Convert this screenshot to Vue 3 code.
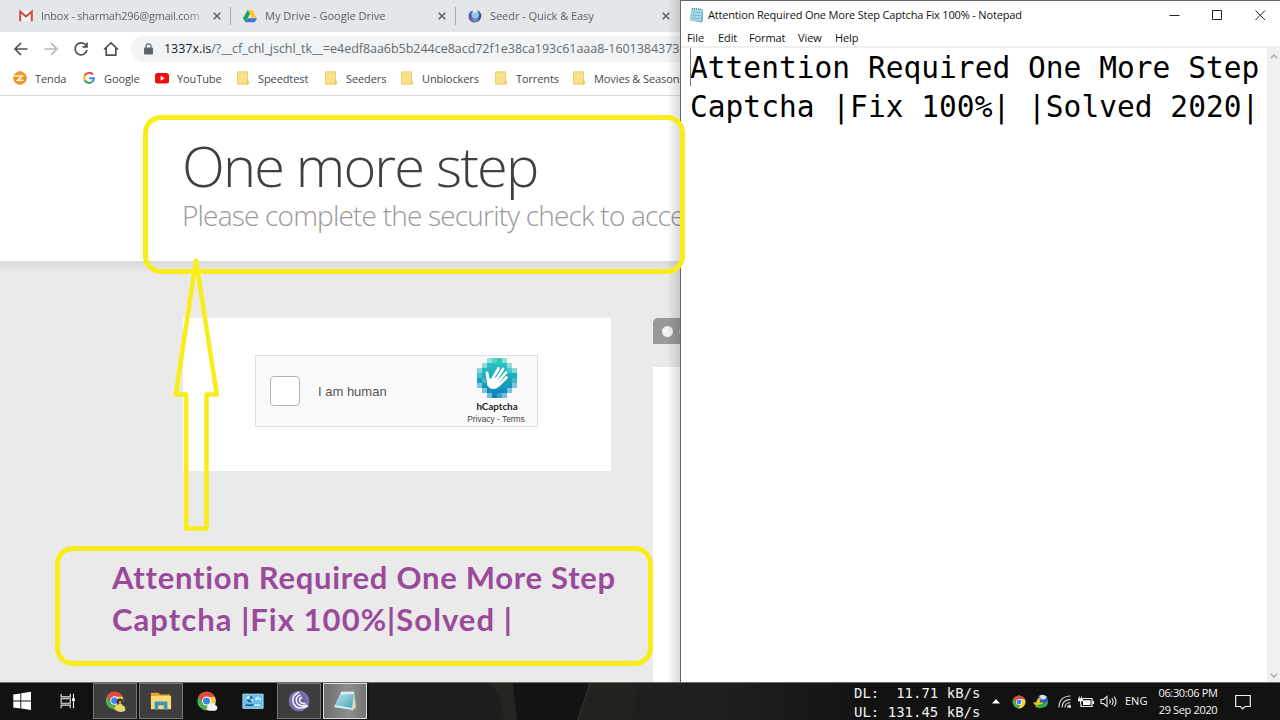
<script setup>
const tabs = [
  { icon: 'gmail', title: 'Inbox - sharmah296@gmail.com', width: 211, cls: 'inbox' },
  { icon: 'drive', title: 'My Drive - Google Drive', width: 225, cls: 'drive' },
  { icon: 'seedr', title: 'Seedr - Quick & Easy', width: 224, cls: 'seedr' }
];

const bookmarks = [
  { icon: 'tenda', name: 'Tenda', width: 69 },
  { icon: 'google', name: 'Google', width: 73 },
  { icon: 'youtube', name: 'YouTube', width: 81 },
  { icon: 'folder', name: 'Speedtest', width: 88 },
  { icon: 'folder', name: 'Seeders', width: 76 },
  { icon: 'folder', name: 'Unblockers', width: 94 },
  { icon: 'folder', name: 'Torrents', width: 78 },
  { icon: 'folder', name: 'Movies & Seasons', width: 140 }
];

const menus = ['File', 'Edit', 'Format', 'View', 'Help'];

const apps = [
  { icon: 'windows' },
  { icon: 'taskview' },
  { icon: 'chrome-user', state: 'open' },
  { icon: 'explorer', state: 'open' },
  { icon: 'chrome-cloud' },
  { icon: 'panel' },
  { icon: 'bittorrent', state: 'open' },
  { icon: 'notepad', state: 'active' }
];
</script>

<template>
  <div class="desktop">
    <svg class="sprite" width="0" height="0">
      <defs>
        <linearGradient id="g-seedr" x1="0" x2="1"><stop offset="0" stop-color="#5a3ca0" /><stop offset=".5" stop-color="#5aa6c8" /><stop offset="1" stop-color="#3c3c8c" /></linearGradient>
        <linearGradient id="g-cap" x1="0" y1="0" x2="0" y2="1"><stop offset="0" stop-color="#2fd0bd" /><stop offset="1" stop-color="#0b7fc0" /></linearGradient>
        <linearGradient id="g-note" x1="0" y1="0" x2="1" y2="1"><stop offset="0" stop-color="#c9eef5" /><stop offset="1" stop-color="#3f9db5" /></linearGradient>
        <radialGradient id="g-bit"><stop offset="0" stop-color="#5d4f97" /><stop offset="1" stop-color="#8076b4" /></radialGradient>
      </defs>
      <symbol id="gmail" viewBox="0 0 14 14">
        <path d="M1 2h12v10H1z" fill="#f3f3f3" />
        <path d="M1.200 12.200V2.600L7 7.400l5.800-4.800v9.600" fill="none" stroke="#d14a40" stroke-width="2" />
      </symbol>
      <symbol id="drive" viewBox="0 0 14 14">
        <path d="M4.700 1h4.600l4.700 8.200H9.300z" fill="#fbc52e" />
        <path d="M4.700 1L7 5.100 2.400 13.200 0 9.200z" fill="#1da362" />
        <path d="M4.800 9.200H14l-2.300 4H2.400z" fill="#3f74d1" />
      </symbol>
      <symbol id="seedr" viewBox="0 0 14 14">
        <circle cx="7" cy="7" r="6.300" fill="url(#g-seedr)" />
        <circle cx="7.200" cy="5.800" r="3.700" fill="#8fcbe0" />
        <path d="M4 0Q4.500 3.800 7 4 9.500 3.800 10 0z" fill="#e4e7ea" />
        <path d="M1 8Q2 12.800 7 13" stroke="#a050b4" stroke-width="1.300" fill="none" />
      </symbol>
      <symbol id="tenda" viewBox="0 0 14 14">
        <path d="M4.500.8L7 0l2.500.8L12.600 3 14 7l-1.400 4-3.100 2.300L7 14l-2.500-.7L1.400 11 0 7l1.400-4z" fill="#ee9626" />
        <path d="M1 5h8L4.800 9.200h5.400" fill="none" stroke="#fff1d8" stroke-width="1.600" />
      </symbol>
      <symbol id="google" viewBox="0 0 14 14">
        <path d="M11 3.700A4.900 4.900 0 0 0 2.700 4.700" fill="none" stroke="#ea4335" stroke-width="2" />
        <path d="M2.700 4.700a4.900 4.900 0 0 0 0 4.600" fill="none" stroke="#fbbc05" stroke-width="2" />
        <path d="M2.700 9.300a4.900 4.900 0 0 0 7.500 1.500" fill="none" stroke="#34a853" stroke-width="2" />
        <path d="M10.200 10.800A4.900 4.900 0 0 0 11.900 7.200H7.200" fill="none" stroke="#4285f4" stroke-width="2" />
      </symbol>
      <symbol id="youtube" viewBox="0 0 14 14">
        <rect y="2" width="14" height="10.500" rx="2.500" fill="#f20d0d" />
        <path d="M5.600 4.800v4.900L9.700 7.200z" fill="#fff" />
      </symbol>
      <symbol id="folder" viewBox="0 0 14 14">
        <path d="M1.500.800h10v8.200l.8 1v3.200H1.500z" fill="#fbe08a" stroke="#e8c65a" stroke-width=".8" />
        <path d="M10.700 13V10l.8-1 .8 1v3z" fill="#e9c95c" />
      </symbol>
      <symbol id="chrome" viewBox="0 0 24 24">
        <circle cx="12" cy="12" r="11" fill="#4caf50" />
        <path d="M12 12L2.500 6.500A11 11 0 0 1 21.700 7z" fill="#e04a3f" />
        <path d="M12 7h9.700A11 11 0 0 1 11 23l5-9z" fill="#fbd044" />
        <path d="M2.500 6.500L7.600 14.500 12 7h9.700A11 11 0 0 0 2.500 6.500z" fill="#e04a3f" />
        <circle cx="12" cy="12" r="5.300" fill="#fff" />
        <circle cx="12" cy="12" r="4.200" fill="#4285e8" />
      </symbol>
      <symbol id="windows" viewBox="0 0 24 24">
        <path d="M2.500 4.800l7.700-1.100v7.700H2.500zM11.200 3.500L21.800 2v9.400H11.200zM2.500 12.500h7.700v7.600l-7.700-1.100zM11.200 12.500h10.600v9.300l-10.600-1.500z" fill="#fff" />
      </symbol>
      <symbol id="taskview" viewBox="0 0 24 24">
        <path d="M4.500 4v3.500h10V4M4.500 20v-3.500h10V20M4.500 9.500h10v5h-10zM18 4v16" fill="none" stroke="#eee" stroke-width="1.200" />
        <path d="M16.500 9h3v3h-3z" fill="#fff" />
      </symbol>
      <symbol id="chrome-user" viewBox="0 0 24 24">
        <use href="#chrome" x="1" y="1" width="21" height="21" />
        <circle cx="17.500" cy="13" r="3.700" fill="#32371e" />
        <path d="M12.500 22q-1-5 3-6l2-2.500 2.500 3q4 1 3 6-5 3-10.500-.5z" fill="#e8d66d" />
        <circle cx="17.500" cy="13.500" r="1.700" fill="#b98a60" />
      </symbol>
      <symbol id="explorer" viewBox="0 0 24 24">
        <path d="M1 3h8l2 2h11v5H1z" fill="#e0a52c" />
        <path d="M1 6.500h22V21H1z" fill="#fbd976" />
        <path d="M5 21.500v-8q0-1 1-1h12q1 0 1 1v8h-4v-5H9v5z" fill="#3d94bd" />
      </symbol>
      <symbol id="chrome-cloud" viewBox="0 0 24 24">
        <use href="#chrome" x=".5" y="1" width="22" height="22" />
        <path d="M14 22.500a3.500 3.500 0 0 1 .3-6.500 4 4 0 0 1 7 .7 3 3 0 0 1-.4 5.800z" fill="#f4f4f4" />
      </symbol>
      <symbol id="panel" viewBox="0 0 24 24">
        <path d="M1 4.500h22v15.500H1z" fill="#67bfe9" stroke="#b5e1f4" />
        <circle cx="8.500" cy="10" r="3.600" fill="#d8eff9" />
        <path d="M8.500 10V6.400A3.600 3.600 0 0 1 12 10zM5 10a3.600 3.600 0 0 0 6 2.700L8.500 10z" fill="#1d6b9a" />
        <path d="M4 16.500h9" stroke="#164c74" stroke-width="1.500" />
        <path d="M13 16.500h7M15.500 8v3M17.500 7v4M20 8.500v2.500" stroke="#edf9ff" stroke-width="1.400" />
      </symbol>
      <symbol id="bittorrent" viewBox="0 0 24 24">
        <circle cx="12" cy="12" r="11.300" fill="url(#g-bit)" />
        <path d="M22 17.500Q10 23 6 14.500 3 6.500 12 2.500M20.500 16.500Q12 19 9.300 13 8 7.500 13.500 5.500M19 14.500q-5 1-6.200-2.500Q12 9 15.500 8" fill="none" stroke="#f1eff8" stroke-width="1.800" />
      </symbol>
      <symbol id="notepad" viewBox="0 0 24 24">
        <path d="M22 2l2 17-4 3.500-2-1z" fill="#d8d3c0" />
        <path d="M8 2h14l-3 19.500L0 18.500z" fill="url(#g-note)" />
        <path d="M8 2h14l-.5 2.500H6.700z" fill="#d9edf0" />
        <path d="M0 18.500l19 3 .6-2L1.300 16.500z" fill="#d1f2f5" />
      </symbol>
    </svg>

    <div class="windows">
      <section class="browser">
        <div class="tab-strip">
          <div v-for="tab in tabs" :key="tab.icon" class="tab" :style="{ width: tab.width + 'px' }">
            <svg class="favicon"><use :href="'#' + tab.icon" /></svg>
            <span class="tab-title" :class="tab.cls">{{ tab.title }}</span>
            <svg class="close" viewBox="0 0 8 8"><path d="M.7.7l6.600 6.600M7.300.7L.7 7.300" /></svg>
          </div>
        </div>

        <div class="toolbar">
          <svg class="nav" viewBox="0 0 16 16"><path d="M14.500 8h-12M8 2L2 8l6 6" /></svg>
          <svg class="nav faded" viewBox="0 0 16 16"><path d="M1.500 8h12M8 2l6 6-6 6" /></svg>
          <svg class="nav" viewBox="0 0 16 16"><path d="M13.200 4.600A6 6 0 1 0 14 9M14 1.500v4.300H9.500" /></svg>
          <svg class="nav" viewBox="0 0 16 16"><path d="M1 8.500L8 2l7 6.500M3.200 7v7.200h9.600V7" /></svg>
          <div class="omnibox">
            <svg class="lock" viewBox="0 0 9 12"><rect y="4.500" width="9" height="7" rx="1" fill="#5f6368" /><path d="M2 5V3.300a2.500 2.500 0 0 1 5 0V5" fill="none" stroke="#5f6368" stroke-width="1.200" /></svg>
            <span class="url"><b>1337x.is</b>/?__cf_chl_jschl_tk__=e4edf8aa6b5b244ce8acd72f1e38ca193c61aaa8-1601384373-</span>
          </div>
        </div>

        <div class="bookmarks">
          <div v-for="b in bookmarks" :key="b.name" class="bookmark" :style="{ width: b.width + 'px' }">
            <svg class="favicon"><use :href="'#' + b.icon" /></svg>
            <span>{{ b.name }}</span>
          </div>
        </div>

        <div class="page">
          <header class="page-header">
            <h1>One more step</h1>
            <h2>Please complete the security check to access</h2>
          </header>
          <div class="page-body">
            <div class="card">
              <div class="captcha">
                <div class="checkbox"></div>
                <span class="human">I am human</span>
                <div class="brand">
                  <svg class="cap-logo" viewBox="0 0 40 40">
                    <path d="M10 0h20v5h5v5h5v20h-5v5h-5v5H10v-5H5v-5H0V10h5V5h5z" fill="url(#g-cap)" />
                    <path d="M10 0h5v5h-5zM25 0h5v5h-5zM5 5h5v5H5zM30 5h5v5h-5zM0 10h5v5H0zM35 10h5v5h-5zM0 25h5v5H0zM35 25h5v5h-5zM5 30h5v5H5zM30 30h5v5h-5zM10 35h5v5h-5zM25 35h5v5h-5z" fill="#fff" opacity=".45" />
                    <path d="M15 0h5v5h-5zM0 15h5v5H0zM35 20h5v5h-5zM20 35h5v5h-5zM30 10h5v5h-5zM5 20h5v5H5z" fill="#fff" opacity=".2" />
                    <path d="M12 26L10 15" stroke="#fff" stroke-width="3" stroke-linecap="round" />
                    <path d="M16 20l5.500-9.500M19 22l7-11M21 24l8-9.500M22 27l7.500-7.500" stroke="#fff" stroke-width="2.700" stroke-linecap="round" />
                    <path d="M10.500 19l3 2 3-3 7.500 8q-3 5-8 5-5-.5-6-5z" fill="#fff" />
                  </svg>
                  <strong>hCaptcha</strong>
                  <small>Privacy - Terms</small>
                </div>
              </div>
            </div>
            <aside class="side">
              <div class="side-tab"><i></i><i></i></div>
              <div class="side-panel"></div>
            </aside>
          </div>
        </div>
        <div class="edge-shadow"></div>
      </section>

      <section class="notepad">
        <div class="title-bar">
          <svg class="note-icon" viewBox="0 0 15 16">
            <path d="M2.500 1.500L14 2.500v11l-1.500 2L1 13.500z" fill="#72b5c5" />
            <path d="M2.500 1.500l10.500.8-1 11.700L1 13.500z" fill="#a4dae5" />
            <path d="M3 5l8.500.6M2.700 8l8.500.6M2.300 11l8.500.6" stroke="#69b0c4" stroke-width=".8" />
            <path d="M3 1.500l10 .8" stroke="#587c86" stroke-width="1.500" stroke-dasharray="1 1" />
          </svg>
          <span class="title">Attention Required One More Step Captcha Fix 100% - Notepad</span>
          <svg class="controls" viewBox="0 0 97 12">
            <path d="M.5 6.500h10M43.500 1.500h9v9h-9zM86.500 1.500l9.500 9.500M96 1.500L86.500 11" fill="none" stroke="#222" />
          </svg>
        </div>
        <nav class="menu">
          <span v-for="m in menus" :key="m" :class="m.toLowerCase()">{{ m }}</span>
        </nav>
        <div class="editor">
          <div class="text">
            <div>Attention Required One More Step</div>
            <div>Captcha |Fix 100%| |Solved 2020|</div>
          </div>
          <div class="scrollbar">
            <svg viewBox="0 0 8 5"><path d="M.8 4.300L4 1l3.200 3.300" /></svg>
            <svg viewBox="0 0 8 5"><path d="M.8.700L4 4 7.200.7" /></svg>
          </div>
        </div>
      </section>
    </div>

    <footer class="taskbar">
      <div v-for="app in apps" :key="app.icon" class="app" :class="app.state">
        <svg><use :href="'#' + app.icon" /></svg>
      </div>
      <div class="backdrop">
        <svg viewBox="0 0 480 38" preserveAspectRatio="none">
          <path d="M118 0q18 12 16 38h14L144 0z" fill="#242421" />
          <path d="M221 0l-13 38h54q6-20 7-38z" fill="#22221f" />
          <path d="M144 0h77l-13 38h-60z" fill="#131313" />
          <path d="M221 0l-12 38" stroke="#33332f" fill="none" />
        </svg>
      </div>
      <div class="netspeed">
        <div>DL:&nbsp; 11.71 kB/s</div>
        <div>UL: 131.45 kB/s</div>
      </div>
      <div class="tray">
        <svg class="up" viewBox="0 0 8 5"><path d="M4 0l4 4.500H0z" fill="#fff" /></svg>
        <svg class="t-chrome"><use href="#chrome" /></svg>
        <svg class="t-idm" viewBox="0 0 16 16">
          <circle cx="9.500" cy="6.500" r="5.500" fill="#2f5fca" />
          <path d="M6 2q4-3 8 1-2 3-5 2.500z" fill="#cde5f5" />
          <path d="M0 8l3 .5Q5 3 9 4 6 6 7 9l2-1 1 1-2 5-6-1 2-1Q1 11 0 8z" fill="#e3c81d" />
          <path d="M4 11l5-1 6-3q.5 5-4 6.500l-5 1z" fill="#2fa54a" />
        </svg>
        <svg class="t-wifi" viewBox="0 0 13 13"><path d="M1 12.500Q1 1.500 12.500 1M4 12.500Q4 4.800 12.500 4.300M7 12.500Q7 8 12.500 7.500M9.500 12.500q0-2 3-2.300" fill="none" stroke="#ccc" stroke-width="1.200" /><circle cx="11.700" cy="11.700" r="1.300" fill="#fff" /></svg>
        <svg class="t-battery" viewBox="0 0 16 12"><path d="M5 2.500h9v8H3V8" fill="none" stroke="#eee" stroke-width="1.200" /><path d="M5 4.200h7.500v4.800H5zM14.500 5H16v3h-1.500z" fill="#fff" /><path d="M1.300.5v2M3.700.5v2M.5 2.700h4V5h-4zM2.500 5v3" stroke="#eee" fill="#eee" /></svg>
        <svg class="t-sound" viewBox="0 0 17 13"><path d="M1 4.500h2.500L7 1.500v10l-3.500-3H1zM9.500 4.500q1.500 2 0 4M11.800 3q2.700 3.500 0 7M14 1.500q4 5 0 10" fill="none" stroke="#eee" stroke-width="1.100" /></svg>
        <span class="lang">ENG</span>
        <div class="clock">
          <div class="time">06:30:06 PM</div>
          <div class="date">29 Sep 2020</div>
        </div>
        <svg class="t-note" viewBox="0 0 16 16"><path d="M.7 1.500h14.600v11H10L7.700 14.800 5.500 12.500H.7z" fill="none" stroke="#eee" stroke-width="1.200" /></svg>
      </div>
    </footer>

    <div class="callout top"></div>
    <div class="callout bottom">
      <div class="first">Attention Required One More Step</div>
      <div class="second">Captcha |Fix 100%|Solved |</div>
    </div>
    <svg class="arrow" viewBox="0 0 50 280">
      <path d="M26 9.500L5.800 143.500H16.200V277.500H36.500V143.500H46.800z" fill="none" stroke="#f9ed19" stroke-width="4.500" stroke-linejoin="round" />
    </svg>
  </div>
</template>

<style>
body {
  overflow: hidden;
}
</style>

<style scoped>
.desktop {
  position: relative;
  width: 1280px;
  height: 720px;
  overflow: hidden;
  display: flex;
  flex-direction: column;
  font-family: "Open Sans", "Noto Sans", sans-serif;
  white-space: nowrap;
  color: #111;
}

svg {
  display: block;
  flex: none;
}

.sprite {
  position: absolute;
}

.windows {
  display: flex;
  height: 682px;
}

/* browser */
.browser {
  position: relative;
  width: 680px;
  overflow: hidden;
  background: #fff;
}

.tab-strip {
  display: flex;
  height: 32px;
  padding-left: 19px;
  box-sizing: border-box;
  background: #e4e7ea;

  .tab {
    display: flex;
    align-items: center;
    flex: none;
    box-sizing: border-box;
    height: 18px;
    margin-top: 7px;
    padding-right: 9px;
  }

  .tab + .tab {
    padding-left: 12px;
    border-left: 1px solid #a9adb1;
  }

  .tab-title {
    margin-left: 8px;
    flex: 1;
    overflow: hidden;
    font-size: 11px;
    line-height: 16px;
    margin-top: -1px;
    color: #5f6368;
  }

  .inbox {
    letter-spacing: -0.24px;
    margin-right: 10px;
    mask-image: linear-gradient(to right, #000 88%, rgba(0, 0, 0, 0.3));
  }

  .seedr {
    letter-spacing: -0.05px;
  }
}

.favicon {
  width: 14px;
  height: 14px;
}

.close {
  width: 8px;
  height: 8px;
  stroke: #55595e;
  stroke-width: 1.4;
}

.toolbar {
  display: flex;
  align-items: center;
  height: 33px;
  padding-left: 13px;

  .nav {
    width: 16px;
    height: 16px;
    margin-right: 14px;
    fill: none;
    stroke: #4d5156;
    stroke-width: 1.7;
  }

  .faded {
    stroke: #b5b7ba;
  }
}

.omnibox {
  display: flex;
  align-items: center;
  flex: 1;
  height: 26px;
  margin-left: -2px;
  padding-left: 13px;
  border-radius: 13px 0 0 13px;
  background: #f1f3f4;
  overflow: hidden;

  .lock {
    width: 9px;
    height: 12px;
  }

  .url {
    margin-left: 11px;
    font-size: 12.5px;
    letter-spacing: -0.03px;
    color: #66696d;
  }

  b {
    font-weight: 400;
    color: #202124;
  }
}

.bookmarks {
  display: flex;
  align-items: center;
  height: 31px;
  padding: 0 0 4px 13px;
  box-sizing: border-box;
  border-bottom: 1px solid #dcdcdc;

  .bookmark {
    display: flex;
    align-items: center;
    flex: none;
    font-size: 11px;
    color: #45484c;
  }

  span {
    margin-left: 8px;
    letter-spacing: -0.1px;
  }
}

.page-header {
  height: 165px;
  padding-left: 182px;
  box-sizing: border-box;
  overflow: hidden;

  h1 {
    margin: 29px 0 0;
    font-size: 56px;
    font-weight: 300;
    line-height: 80px;
    letter-spacing: -1.85px;
    color: #404040;
  }

  h2 {
    margin: -8px 0 0;
    font-size: 28px;
    font-weight: 300;
    line-height: 36px;
    letter-spacing: -0.8px;
    color: #999;
  }
}

.page-body {
  display: flex;
  height: 421px;
  padding: 57px 0 0 183px;
  box-sizing: border-box;
  background: linear-gradient(#dbdbdb, #e2e2e2 7px, #eaeaea 14px);
}

.card {
  flex: none;
  width: 428px;
  height: 153px;
  padding: 37px 0 0 72px;
  box-sizing: border-box;
  background: #fff;
}

.captcha {
  display: flex;
  align-items: center;
  width: 283px;
  height: 72px;
  box-sizing: border-box;
  border: 1px solid #dfdfdf;
  background: #fafafa;
  font-family: "Liberation Sans", Arial, sans-serif;

  .checkbox {
    width: 28px;
    height: 28px;
    margin-left: 14px;
    border: 1px solid #b4b4b4;
    border-radius: 4px;
    background: #fff;
  }

  .human {
    width: 70px;
    margin-left: 18px;
    font-size: 13px;
    color: #555;
  }

  .brand {
    display: flex;
    flex-direction: column;
    align-items: center;
    width: 60px;
    margin-left: 79px;
  }

  .cap-logo {
    width: 40px;
    height: 40px;
  }

  strong {
    margin-top: 2px;
    font-family: Lato, sans-serif;
    font-size: 9.8px;
    line-height: 12px;
    color: #222;
  }

  small {
    margin: 1px 2px 0 0;
    font-size: 8.4px;
    line-height: 12px;
    color: #444;
  }
}

.side {
  flex: 1;
  margin-left: 42px;
  overflow: hidden;

  .side-tab {
    display: flex;
    align-items: center;
    gap: 6px;
    height: 26px;
    padding-left: 9px;
    border-radius: 5px 0 0 0;
    background: #999;
    overflow: hidden;
  }

  i {
    flex: none;
    width: 11px;
    height: 11px;
    border-radius: 50%;
    background: #f2f2f2;
  }

  i + i {
    background: #c4c4c4;
  }

  .side-panel {
    height: 315px;
    margin-top: 23px;
    background: #fff;
  }
}

.edge-shadow {
  position: absolute;
  top: 0;
  right: 0;
  bottom: 0;
  width: 13px;
  background: linear-gradient(to right, transparent, rgba(0, 0, 0, 0.14));
}

/* notepad */
.notepad {
  display: flex;
  flex-direction: column;
  flex: 1;
  box-sizing: border-box;
  border-left: 1px solid #666;
  border-top: 1px solid #666;
  background: #fff;
}

.title-bar {
  display: flex;
  align-items: center;
  height: 27px;
  padding-left: 8px;

  .note-icon {
    width: 15px;
    height: 16px;
  }

  .title {
    width: 461px;
    margin-left: 4px;
    font-size: 11px;
    letter-spacing: -0.17px;
    color: #111;
  }

  .controls {
    width: 97px;
    height: 12px;
  }
}

.menu {
  display: flex;
  align-items: center;
  height: 18px;
  padding-left: 6px;
  border-bottom: 2px solid #efefef;
  font-size: 11px;
  letter-spacing: -0.1px;

  .file {
    width: 31px;
  }

  .edit {
    width: 31px;
  }

  .format {
    width: 49px;
  }

  .view {
    width: 37px;
  }
}

.editor {
  display: flex;
  flex: 1;

  .text {
    width: 586px;
    padding: 1px 0 0 9px;
    box-sizing: border-box;
    font-family: "DejaVu Sans Mono", "Liberation Mono", monospace;
    font-size: 29.5px;
    letter-spacing: 0.03px;
    line-height: 38.5px;
    color: #000;
  }

  .text::before {
    content: "";
    position: absolute;
    width: 1px;
    height: 38px;
    margin-top: -1px;
    background: #777;
  }

  .scrollbar {
    display: flex;
    flex-direction: column;
    justify-content: space-between;
    align-items: center;
    flex: 1;
    padding: 6px 0 4px;
    background: #f0f0f0;
  }

  .scrollbar svg {
    width: 8px;
    height: 5px;
    fill: none;
    stroke: #aaa;
    stroke-width: 1.4;
  }
}

/* taskbar */
.taskbar {
  display: flex;
  height: 38px;
  box-sizing: border-box;
  border-top: 1px solid #6c6c6c;
  background: #121212;

  .app {
    display: flex;
    align-items: center;
    justify-content: center;
    width: 44px;
    height: 36px;
    box-sizing: border-box;
    margin-right: 2px;
    border: 1px solid transparent;
  }

  .app:nth-child(3) {
    margin-left: 1px;
  }

  .app svg {
    width: 22px;
    height: 22px;
  }

  .open {
    background: #3d3d3d;
    border-color: #777;
  }

  .active {
    background: linear-gradient(90deg, #6f6f6f, #8f8f8f 60%, #737373);
    border-color: #ddd;
  }
}

.backdrop {
  width: 485px;
  background: linear-gradient(90deg, #1c1c1b, #1e1e1d 30%, #20201e 70%, #141414);

  svg {
    width: 480px;
    height: 37px;
  }
}

.netspeed {
  width: 134px;
  padding-top: 1px;
  font-family: "DejaVu Sans Mono", "Liberation Mono", monospace;
  font-size: 14px;
  line-height: 18.5px;
  color: #f0f0f0;
}

.tray {
  display: flex;
  align-items: center;
  color: #f5f5f5;

  .up {
    width: 8px;
    height: 5px;
    margin-left: 4px;
  }

  .t-chrome {
    width: 14px;
    height: 14px;
    margin-left: 12px;
  }

  .t-idm {
    width: 16px;
    height: 16px;
    margin-left: 7px;
  }

  .t-wifi {
    width: 13px;
    height: 13px;
    margin-left: 9px;
  }

  .t-battery {
    width: 16px;
    height: 12px;
    margin-left: 7px;
  }

  .t-sound {
    width: 17px;
    height: 13px;
    margin-left: 6px;
  }

  .lang {
    width: 33px;
    margin: -2px 0 0 8px;
    font-size: 11px;
  }

  .clock {
    width: 60px;
    margin-top: -2px;
    text-align: center;
    font-size: 11px;
    letter-spacing: -0.35px;
    line-height: 17px;
  }

  .t-note {
    width: 16px;
    height: 16px;
    margin-left: 17px;
  }
}

/* highlights drawn over the windows */
.callout {
  position: absolute;
  box-sizing: border-box;
  border: 5px solid #f9ed19;
  border-radius: 18px;
}

.top {
  left: 143px;
  top: 115px;
  width: 542px;
  height: 159px;
}

.bottom {
  left: 55px;
  top: 546px;
  width: 598px;
  height: 120px;
  padding: 5px 0 0 52px;
  font-family: Lato, sans-serif;
  font-size: 31px;
  font-weight: 700;
  line-height: 42px;
  letter-spacing: 0.72px;
  color: #9b4a9b;

  .second {
    letter-spacing: 1.05px;
  }
}

.arrow {
  position: absolute;
  left: 170px;
  top: 251px;
  width: 50px;
  height: 280px;
}
</style>
